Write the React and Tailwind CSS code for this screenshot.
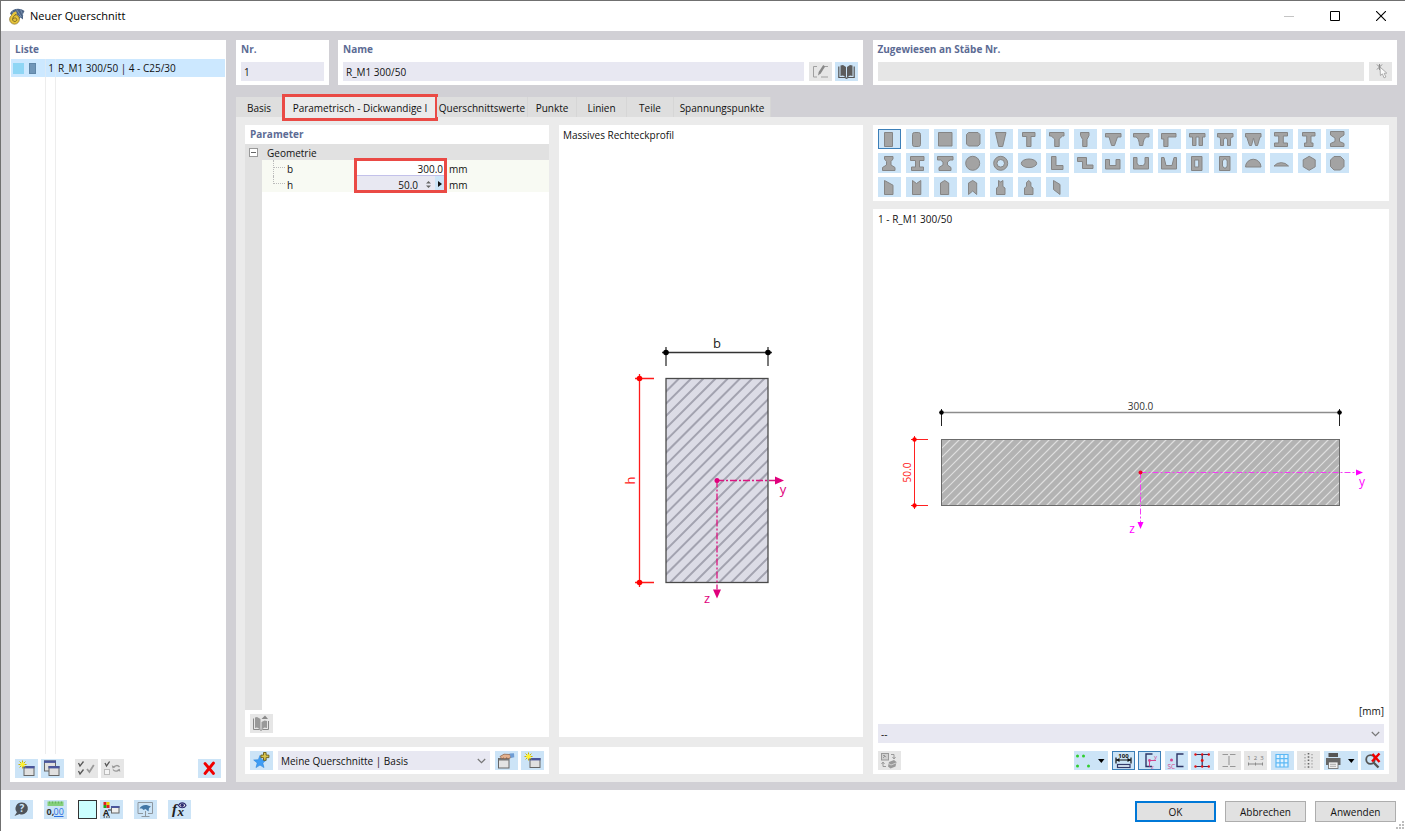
import React from "react";

const BLUE = "bg-[#cce4f7]";
const GREY = "bg-[#e6e6e6]";

function IconButton({ label, disabled, active, wide, children }) {
  const bg = disabled ? GREY : BLUE;
  const ring = active ? "border border-[#3c7fb8]" : "border border-transparent";
  return (
    <button
      type="button"
      aria-label={label}
      title={label}
      disabled={disabled}
      className={`${bg} ${ring} ${wide ? "w-[34px]" : "w-[23px]"} flex h-[19px] shrink-0 items-center justify-center`}
    >
      <svg
        viewBox={wide ? "0 0 34 19" : "0 0 23 19"}
        className={wide ? "h-[19px] w-[34px] shrink-0" : "h-[19px] w-[23px] shrink-0"}
        fill="none"
        aria-hidden="true"
      >
        {children}
      </svg>
    </button>
  );
}

function Panel({ className = "", children }) {
  return <section className={`bg-white ${className}`}>{children}</section>;
}

const TITLE = "text-[10px] leading-[18px] font-bold text-[#5c6b94]";
const FIELD = "h-[19px] min-w-0 px-[3px] text-[10px] text-[#111] outline-none";

/* ---------- toolbar glyphs ---------- */

const WindowGlyph = ({ x = 8, y = 7 }) => (
  <g>
    <rect x={x + 0.5} y={y + 0.5} width="10" height="9" fill="#e0e0e0" stroke="#666" />
    <rect x={x} y={y} width="11" height="2.4" fill="#4a569c" />
  </g>
);

const NewGlyph = () => (
  <>
    <WindowGlyph x={8.5} y={7} />
    <path d="M7.5 1.5v8M3.5 5.5h8M4.6 2.6l5.8 5.8M10.4 2.6L4.6 8.4" stroke="#c9b400" strokeWidth="1" />
    <circle cx="7.5" cy="5.5" r="2.2" fill="#fff22e" />
  </>
);

const CopyGlyph = () => (
  <>
    <rect x="3.5" y="2" width="11" height="10" fill="#e0e0e0" stroke="#666" />
    <rect x="3" y="1.5" width="12" height="2.4" fill="#4a569c" />
    <WindowGlyph x={7.5} y={7} />
  </>
);

const ChecksGlyph = () => (
  <>
    <path d="M3.5 4l1.5 3L8.5 2.5M3.5 12l1.5 3 3.5-4.5" stroke="#555" strokeWidth="1.3" />
    <path d="M12 10l2.4 3 4.4-7" stroke="#999" strokeWidth="1.8" />
  </>
);

const CheckSwapGlyph = () => (
  <>
    <path d="M4 4l1.5 3L8.6 2.5" stroke="#555" strokeWidth="1.3" />
    <rect x="3.5" y="10.5" width="5" height="5" fill="#f4f4f4" stroke="#bbb" />
    <path d="M18.5 8c-1.5-2-4-2-6 .2M12 10.5c1.5 2.2 4.4 2.2 6 .4" stroke="#999" strokeWidth="1.3" />
    <path d="M10.8 6.2l.8 3.3 2.8-1.5zM19.3 12.8l-.5-3-2.8 1.2z" fill="#999" />
  </>
);

const DeleteGlyph = () => (
  <path d="M7 4.5l8.500 10M15.500 4l-8.500 10.500" stroke="#f00000" strokeWidth="2.800" strokeLinecap="round" />
);

const StarPlusGlyph = () => (
  <>
    <path d="M10 4.5l1.7 4.2 4.6.3-3.5 3 1.2 4.6-4-2.5-4 2.5 1.2-4.6-3.5-3 4.6-.3z" fill="#3d9df5" stroke="#2d86dc" strokeWidth=".6" />
    <path d="M13.5 1.5h2.6v2.6h2.8v2.5h-2.8v2.7h-2.6V6.6h-2.6V4.1h2.6z" fill="#d7c34c" stroke="#665a16" strokeWidth=".9" />
  </>
);

const HandGlyph = () => (
  <>
    <rect x="3.5" y="7.5" width="10.5" height="9.5" fill="#e4e4e4" stroke="#666" />
    <path d="M4 8.5h10" stroke="#777" strokeWidth="2" />
    <path d="M5 5.5l4-2.3 6 .3 1 3-3 1.2-1.5-1-1.5 1.400-1.5-1.200-1.5.9z" fill="#e3b18e" stroke="#8a5a3c" strokeWidth=".7" />
    <path d="M14.5 2.5l4.5-.3.3 4-3.5.8z" fill="#6f9dd4" />
  </>
);

const BookGlyph = () => (
  <>
    <path d="M5.5 3.5L8 3l3 2v10.500L8 13.5l-2.500.5zM17.500 3.5L15 3l-3 2v10.500l3-2 2.500.5z" fill="#5c5c5c" />
    <path d="M3.8 4.500v11h6.200l1.500.8 1.500-.8h6.200v-11" stroke="#555" strokeWidth="1.200" />
  </>
);

const BookImportGlyph = () => (
  <>
    <path d="M5 3.500L7 3l3.500 2v10.500L7 13.500l-2 .5z" fill="#999" />
    <path d="M11.500 8l3-1.500L17 7v7l-2.500-.5-3 2z" fill="#999" />
    <path d="M3.500 4.500v11h6l1.500.8 1.500-.8h6V7" stroke="#888" strokeWidth="1" />
    <path d="M11.500 5L15 1.500 18 5z" fill="#8a8a8a" />
  </>
);

const EditGlyph = () => (
  <>
    <path d="M8 4.500H4.500v10.500H8M12 15h7M16 4.500h3" stroke="#a0a0a0" strokeWidth="1" />
    <path d="M9 13.500l.7-3.500 4.500-7 2 1.500-4.500 7z" fill="#888" />
  </>
);

const PickGlyph = () => (
  <>
    <path d="M8 2.500l5 5M13 2.500l-5 5M10.500 2v6" stroke="#8a8a8a" strokeWidth="1" />
    <path d="M11 5l.4 8.500 2-1.600 1.700 4 1.800-.9-1.700-3.700 2.600-.2z" fill="#fafafa" stroke="#9a9a9a" strokeWidth=".8" />
  </>
);

const HelpGlyph = () => (
  <>
    <path d="M12 2.500a6 6 0 1 1-2.500 11.500L4.500 16l2.400-3.700A6 6 0 0 1 12 2.500z" fill="#4e545b" />
    <text x="12" y="12" fontSize="10" fontWeight="700" textAnchor="middle" fill="#cce4f7">?</text>
  </>
);

const DecimalsGlyph = () => (
  <>
    <rect x="3.500" y="1.500" width="16" height="4.500" fill="#85cf7c" />
    <path d="M5.500 1.500v2M8.500 1.500v2M11.500 1.500v2M14.500 1.500v2M17.500 1.500v2" stroke="#5fae57" strokeWidth=".8" />
    <text x="2.500" y="14.500" fontSize="9" fontWeight="700" fill="#333">0,</text>
    <text x="9.500" y="14.500" fontSize="9" fill="#2a6fe0">00</text>
    <path d="M10 16.500h9.500" stroke="#2a6fe0" />
  </>
);

const DisplayGlyph = () => (
  <>
    <path d="M3.500 2h3v3h-3z" fill="#e02020" />
    <path d="M6.500 2h3v3h-3z" fill="#ead000" />
    <path d="M3.500 5h3v3h-3z" fill="#1ba81b" />
    <path d="M6.500 5h3v3h-3z" fill="#e02020" />
    <text x="3" y="15.500" fontSize="9" fontWeight="700" fill="#222">A</text>
    <path d="M3.500 17h7" stroke="#222" strokeDasharray="1.500 1" />
    <path d="M8 10h3" stroke="#222" />
    <rect x="11.500" y="6.500" width="7.500" height="6.500" fill="#eee" stroke="#666" />
    <path d="M11 7h8.500" stroke="#4a569c" strokeWidth="2" />
  </>
);

const MonitorGlyph = () => (
  <>
    <path d="M9 13.500H4v-11h14.500v11H14M7.500 16.500h8" stroke="#8e979f" strokeWidth="1" />
    <path d="M5.500 8.500c2-3.500 6-5 11.500-2l-2 1.500-.5 3.500-3-2.500-2 1-1.500-1.500z" fill="#4377a6" />
    <path d="M11.500 11v5" stroke="#8e979f" />
  </>
);

const FormulaGlyph = () => (
  <>
    <text x="4" y="14" fontSize="15" fontStyle="italic" fontWeight="700" fontFamily="Liberation Serif, serif" fill="#222">f</text>
    <text x="9.500" y="15.500" fontSize="13" fontStyle="italic" fontWeight="700" fontFamily="Liberation Serif, serif" fill="#222">x</text>
    <path d="M10.500 5.500c1.500-3.500 6-3.500 7.500 0-1.500 3-6 3-7.500 0z" fill="#eee" stroke="#2b2b70" strokeWidth="1.100" />
    <circle cx="14.200" cy="5.200" r="1.700" fill="#2b2b70" />
  </>
);

const DotsGlyph = () => (
  <>
    <g fill="#2fce2f">
      <circle cx="3.500" cy="5" r="1.500" />
      <circle cx="9.500" cy="5" r="1.500" />
      <circle cx="3.500" cy="15" r="1.500" />
      <circle cx="14.500" cy="15" r="1.500" />
    </g>
    <path d="M24 8h6.500l-3.200 4z" fill="#000" />
  </>
);

const DimGlyph = () => (
  <>
    <text x="11.500" y="6.500" fontSize="6" fontWeight="700" textAnchor="middle" fill="#111">100</text>
    <path d="M4 9h15M4 6.500v6M19 6.500v6" stroke="#111" strokeWidth="1.200" />
    <path d="M4 9l3.500-2v4zM19 9l-3.500-2v4z" fill="#111" />
    <rect x="5.500" y="13.500" width="12.500" height="3" fill="#dbe9f5" stroke="#333a6a" strokeWidth="1.200" />
  </>
);

const AxesGlyph = () => (
  <>
    <path d="M14.500 3H8v12.500h6" stroke="#2d3566" strokeWidth="1.400" />
    <path d="M11.500 9.500h6.500M11.500 9.500v6" stroke="#d2468f" strokeWidth="1" />
    <circle cx="11.500" cy="9.500" r="1.400" fill="#d2468f" />
    <text x="16" y="7.500" fontSize="6" fill="#d2468f">y</text>
    <text x="13" y="17.500" fontSize="6" fill="#d2468f">z</text>
  </>
);

const ShearGlyph = () => (
  <>
    <path d="M18.500 3h-6.500v12.500h6.500" stroke="#2d3566" strokeWidth="1.400" />
    <circle cx="6.500" cy="9" r="1.500" fill="#d2468f" />
    <text x="2.500" y="17.500" fontSize="6.500" fill="#d2468f">SC</text>
  </>
);

const BeamGlyph = () => (
  <>
    <path d="M5 3.500h12.500M5 15.500h12.500M11.200 3.500v12" stroke="#2d3566" strokeWidth="1.200" />
    <g fill="#e81010">
      <circle cx="4.500" cy="3.500" r="1.200" />
      <circle cx="11.200" cy="3.500" r="1.200" />
      <circle cx="17.800" cy="3.500" r="1.200" />
      <circle cx="11.200" cy="9.500" r="1.400" />
      <circle cx="4.500" cy="15.500" r="1.200" />
      <circle cx="11.200" cy="15.500" r="1.200" />
      <circle cx="17.800" cy="15.500" r="1.200" />
    </g>
  </>
);

const BeamOffGlyph = () => (
  <path d="M4.500 3.500h5.500M12 3.500h5.500M4.500 15.500h5.500M12 15.500h5.500M11 5v9" stroke="#979797" strokeWidth="1.100" />
);

const NumbersGlyph = () => (
  <>
    <text x="11.500" y="8.500" fontSize="6" textAnchor="middle" fill="#777">1&#160; 2&#160; 3</text>
    <path d="M4 13h15M4.500 11.500v3M11.500 11.500v3M18.500 11.500v3" stroke="#8a8a8a" />
  </>
);

const GridGlyph = () => (
  <>
    <rect x="5" y="3.500" width="12" height="12.500" fill="#e2f3ff" />
    <path d="M5 3.500h12M5 7.700h12M5 11.800h12M5 16h12M5 3v13.500M9 3v13.500M13 3v13.500M17 3v13.500" stroke="#5bb8f5" strokeWidth="1.200" />
  </>
);

const DottedGlyph = () => (
  <>
    <path d="M11.500 2v16" stroke="#666" strokeWidth="1.600" strokeDasharray="1.500 1.800" />
    <path d="M8 3v14M15 3v14" stroke="#a0a0a0" strokeWidth="1.300" strokeDasharray="1.300 1.800" />
  </>
);

const PrintGlyph = () => (
  <>
    <rect x="4.500" y="2" width="9.500" height="4" fill="#555" />
    <path d="M2 7h14.500v7H2z" fill="#666" />
    <rect x="4.500" y="11" width="9.500" height="6.500" fill="#f0f0f0" stroke="#666" strokeWidth=".8" />
    <path d="M6 13.300h6M6 15.300h6" stroke="#999" strokeWidth=".8" />
    <path d="M24 8h6.500l-3.200 4z" fill="#000" />
  </>
);

const ZoomOffGlyph = () => (
  <>
    <circle cx="9.500" cy="8.500" r="4.300" stroke="#555" strokeWidth="1.800" />
    <path d="M12.500 11.500l5 5" stroke="#555" strokeWidth="2.400" />
    <path d="M11.500 3l7 8M18.500 2.500l-7.500 8" stroke="#f00000" strokeWidth="2.400" />
  </>
);

const SwapGlyph = () => (
  <>
    <rect x="3.500" y="2.500" width="7" height="6.500" fill="#d0d0d0" stroke="#999" />
    <path d="M5 7l2-2 1 1.200M5 4.500h2M13 3.500h3v4M14.500 6l1.500 2 1.500-2M8 15.500H5v-4M3.500 13L5 11l1.500 2" stroke="#999" />
    <path d="M11 11l5-2 2.500 2-1 4.500-5 2-2.500-2z" fill="#999" />
    <path d="M10.500 12.500l2.500 1.500 5-2" stroke="#ddd" strokeWidth=".8" />
  </>
);

/* ---------- section shape palette ---------- */

const SHAPES = [
  ["Rechteck", "M6.500 3.500h8v14h-8z"],
  ["Rechteck abgerundet", "M9 3.500h3.500q2 0 2 2v10q0 2-2 2H8.500q-2 0-2-2v-10q0-2 2-2z"],
  ["Quadrat", "M4.500 3.500h13.500v13.500H4.500z"],
  ["Quadrat abgerundet", "M6.500 3.500h9.500l2 2v9.500l-2 2H6.500l-2-2V5.500z"],
  ["Trapez", "M5.500 3.500h10.500l-3.300 14H8.700z"],
  ["T-Profil", "M4.500 3.500H17V7.500h-4v10H8.700v-10H4.500z"],
  ["T-Profil mit Voute", "M3.500 3.500H18V7h-1.500l-3.300 3v7.500H8.700V10L5.200 7H3.500z"],
  ["T-Profil schmal", "M6.500 3.500H15V6.500l-2 4v7H8.700v-7l-2.200-4z"],
  ["T-Profil konisch", "M3.500 4.500H19V8h-3.500l-3 8.500H9.600L7 8H3.500z"],
  ["T-Profil rund", "M3.500 4.500H19V8h-2.500q-3 1-3.700 8.500H9.500Q9 9 6 8H3.500z"],
  ["L-Flansch", "M3.500 4.500H18V8h-8v9.500H5.800V10H3.500z"],
  ["TT-Profil", "M3.500 4.500H19V8h-2.500v8.500h-3.500V8h-3v8.500H6.500V8h-3z"],
  ["TT-Profil rund", "M3.500 4.500H19V8h-1.500q-1 1-1 3v5.500h-3V11q0-2-2-2t-2 2v5.500h-3V11q0-2-1-3h-2z"],
  ["TT-Profil konisch", "M3.500 4.500H19V8h-1l-2.500 8.500h-2L11.500 9l-2 7.500h-2L4.700 8H3.500z"],
  ["I-Profil", "M4.500 3.500H17.500V7H13.300v7h4.200v3.500H4.500V14h4.200V7H4.500z"],
  ["I-Profil unsymmetrisch", "M4.500 3.500H17V7H13v7h2v3.500H6.500V14h2.200V7H4.500z"],
  ["I-Profil mit Vouten", "M4.500 2.500H18V6l-4.500 3v3.500L18 14.500v3H4.500v-3L9 12.500V9L4.500 6z"],
  ["I-Profil Vouten unten", "M6.500 3.500h8.500V6l-2 2.500V12l4 2.500v3H4.500v-3l4-2.500V8.500l-2-2.500z"],
  ["I-Profil versetzt", "M4.500 3.500H18V7.500h-4.500V14H17.500v3.500H5.500V14H9.500V7.500h-5z"],
  ["I-Profil breit", "M3.500 3.500H19V7h-3l-2.500 2v3l3.500 2.500v3H5v-3L9 12V9L6.500 7h-3z"],
  ["Kreis", "M17.700 10.300a7 7 0 1 1-14 0a7 7 0 1 1 14 0z"],
  ["Rohr", "M17.700 10.300a7 7 0 1 1-14 0a7 7 0 1 1 14 0zM14.500 10.300a3.800 3.800 0 1 0-7.600 0a3.800 3.800 0 1 0 7.600 0z"],
  ["Ellipse", "M18.700 10.300a7.700 4.300 0 1 1-15.400 0a7.700 4.300 0 1 1 15.400 0z"],
  ["L-Profil", "M5.500 3.500h4.500v9h7v4H5.500z"],
  ["Z-Profil", "M3.500 4.500H12.500v7.500H19v3.500H8.500V8.500h-5z"],
  ["U-Profil", "M3.500 6.500h4v6h6.500v-6H18v9.500H3.500z"],
  ["U-Profil rund", "M3.500 4.500h3.500v5.500q.5 2.500 2.500 2.500h3q2 0 2.500-2.500V4.500h3.500V16H3.500z"],
  ["U-Profil konisch", "M3.500 4.500H6l2 8h6l2-8h2.500V16H3.500z"],
  ["Hohlkasten", "M5.500 3.500h10.500v14H5.500zM8.700 7v7h4V7z"],
  ["Hohlkasten rund", "M5.500 3.500h10.500v14H5.500zM10 6L8.500 8v5l1.500 2h2l1.200-2V8L12 6z"],
  ["Halbkreis", "M3.500 14a7.700 7.700 0 0 1 15.500 0z"],
  ["Kreissegment", "M4 13a9.500 9.500 0 0 1 14.500 0z"],
  ["Sechseck", "M11.200 3.300l6 3.500v7l-6 3.500-6-3.500v-7z"],
  ["Achteck", "M8 3.500h6.500l3.500 3.500v6.500L14.500 17H8l-3.500-3.500V7z"],
  ["Schräge Oberseite", "M6.500 3.500l8.500 4.700v9.300H6.500z"],
  ["Kerbe oben", "M6.500 3.500l4 3 4.300-3v14H6.500z"],
  ["Satteldach", "M6.500 6l4.200-2.500L14.700 6v11.500H6.500z"],
  ["Satteldach mit Kerbe", "M6.500 6l4.200-2.500L14.700 6v11.500l-4-3.500-4.200 3.500z"],
  ["Flasche mit Kerbe", "M8.500 3.500l2.200 1.500 2.200-1.500v6l2.100 1.500v6.500H6.500v-6.500L8.500 9.500z"],
  ["Flasche spitz", "M8.500 5.500l2.200-2 2.200 2v4l2.100 1.500v6.500H6.500v-6.500L8.500 9.500z"],
  ["Parallelogramm", "M7.500 3.500l6.500 4v10l-6.500-5z"],
];

function ShapePalette() {
  return (
    <div className="grid w-max grid-cols-[repeat(17,23px)] gap-x-[5px] gap-y-1">
      {SHAPES.map(([name, d], i) => (
        <button
          key={name}
          type="button"
          aria-label={name}
          title={name}
          aria-pressed={i === 0}
          className={
            i === 0
              ? "flex h-5 w-[23px] items-center justify-center border border-[#3c7fb8] bg-[#cce4f7]"
              : "flex h-5 w-[23px] items-center justify-center bg-[#cce4f7]"
          }
        >
          <svg viewBox="0 0 23 20" className="h-5 w-[23px] shrink-0" aria-hidden="true">
            <path d={d} fill="#a3a3a3" stroke="#858585" strokeWidth="1" fillRule="evenodd" />
          </svg>
        </button>
      ))}
    </div>
  );
}

/* ---------- drawings ---------- */

/* Diagonal strokes running up to the right, clipped to a rectangle. */
function Hatch({ id, x, y, width, height, step, offset, stroke, strokeWidth }) {
  const lines = [];
  for (let s = offset; s < width + height; s += step) {
    lines.push(`M${x + s - height} ${y + height}L${x + s} ${y}`);
  }
  return (
    <>
      <clipPath id={id}>
        <rect x={x} y={y} width={width} height={height} />
      </clipPath>
      <path d={lines.join("")} clipPath={`url(#${id})`} stroke={stroke} strokeWidth={strokeWidth} fill="none" />
    </>
  );
}

function ProfileSketch() {
  return (
    <svg viewBox="0 0 180 290" className="h-[290px] w-[180px]" role="img" aria-label="Massives Rechteckprofil">
      <rect x="46" y="53.500" width="102" height="204" fill="#dcdce6" />
      <Hatch id="hatch-profile" x={46} y={53.5} width={102} height={204} step={12.2} offset={13} stroke="#a3a3b0" strokeWidth="2" />
      <rect x="46" y="53.500" width="102" height="204" fill="none" stroke="#4a4a4a" strokeWidth="1.300" />
      <path d="M42 27.500h110M46 22v19M148 22v19" stroke="#333" strokeWidth="1.300" />
      <circle cx="46" cy="27.500" r="2.800" />
      <circle cx="148" cy="27.500" r="2.800" />
      <text x="97" y="23" fontSize="13" textAnchor="middle" fill="#222">b</text>
      <path d="M19.500 49v213M15 53.500h19M15 257.500h19" stroke="#ff1a1a" strokeWidth="1.300" />
      <circle cx="19.500" cy="53.500" r="2.800" fill="#f00" />
      <circle cx="19.500" cy="257.500" r="2.800" fill="#f00" />
      <text x="15" y="155.500" fontSize="13" textAnchor="middle" fill="#ff1a1a" transform="rotate(-90 15 155.500)">h</text>
      <path d="M97 155.500h58M97 155.500v109" stroke="#dc1480" strokeWidth="1.300" strokeDasharray="7 2 2 2" />
      <circle cx="97" cy="155.500" r="2.500" fill="#e0007c" />
      <path d="M155 151.500v8l9-4zM93 264.500h8l-4 9z" fill="#e0007c" />
      <text x="163" y="169" fontSize="13" textAnchor="middle" fill="#e0007c">y</text>
      <text x="87" y="278" fontSize="13" textAnchor="middle" fill="#e0007c">z</text>
    </svg>
  );
}

function SectionSketch() {
  return (
    <svg viewBox="0 0 500 150" className="h-[150px] w-[500px] max-w-full" role="img" aria-label="R_M1 300/50">
      <rect x="60.500" y="47.500" width="398" height="66" fill="#b3b3b3" />
      <Hatch id="hatch-section" x={60.5} y={47.5} width={398} height={66} step={9} offset={9} stroke="#dedede" strokeWidth="1.200" />
      <rect x="60.500" y="47.500" width="398" height="66" fill="none" stroke="#6b6b6b" />
      <path d="M58 20.500h403" stroke="#8c8c8c" strokeWidth="1.500" />
      <path d="M60.500 17v17M458.500 17v17" stroke="#222" />
      <circle cx="60.500" cy="20.500" r="2.200" />
      <circle cx="458.500" cy="20.500" r="2.200" />
      <text x="259.500" y="17.500" fontSize="10" textAnchor="middle" fill="#333">300.0</text>
      <path d="M33.500 44v73M30 47.500h17M30 113.500h17" stroke="#ff2020" />
      <circle cx="33.500" cy="47.500" r="2.200" fill="#f00" />
      <circle cx="33.500" cy="113.500" r="2.200" fill="#f00" />
      <text x="30" y="80.500" fontSize="10" textAnchor="middle" fill="#ff2020" transform="rotate(-90 30 80.500)">50.0</text>
      <path d="M259.500 80.500h216" stroke="#f43cf4" strokeDasharray="6 2 2 2" />
      <path d="M259.500 80.500v50" stroke="#f43cf4" strokeDasharray="6 2 2 2" />
      <path d="M475 77.500v6l7-3zM256.500 130h6l-3 7z" fill="#f0f" />
      <circle cx="259.500" cy="80.500" r="2" fill="#f00020" />
      <text x="481" y="94" fontSize="12" textAnchor="middle" fill="#f0f">y</text>
      <text x="251" y="141" fontSize="12" textAnchor="middle" fill="#f0f">z</text>
    </svg>
  );
}

/* ---------- page parts ---------- */

function Combo({ id, label, value }) {
  return (
    <div className="relative min-w-0 flex-1">
      <label htmlFor={id} className="sr-only">{label}</label>
      <select id={id} className={`${FIELD} block w-full appearance-none bg-[#e8e8f2] leading-[18px]`}>
        <option>{value}</option>
      </select>
      <svg viewBox="0 0 9 6" className="pointer-events-none absolute top-[7px] right-1 h-[6px] w-[9px]" fill="none" aria-hidden="true">
        <path d="M.8 1l3.700 3.700L8.200 1" stroke="#777" strokeWidth="1.200" />
      </svg>
    </div>
  );
}

function TitleBar() {
  return (
    <header className="flex h-[30px] shrink-0 items-center bg-white pr-px pl-2">
      <svg viewBox="0 0 16 17" className="h-[17px] w-4" aria-hidden="true">
        <path d="M1 5.500C3 1 10-1 15.500 3l-1.500 3v5.500l-2.500-2-2 2.500L3 8z" fill="#4d6485" />
        <path d="M3 3.500l9 6M7.500 1.500l5 7.500M11.500 1.500l2.500 6" stroke="#8aa3c2" strokeWidth=".7" />
        <circle cx="5.500" cy="11.300" r="4.900" fill="#e0bd35" stroke="#8a7430" strokeWidth=".7" />
        <path d="M7.500 4.500C4.500 5.500 3 8.500 3.300 11.500c.5 3 4.700 2.600 4.700 0 0-2.400-3.400-2.700-4.400-.4" fill="none" stroke="#e6c53c" strokeWidth="2.600" />
        <path d="M7 6.500C4.800 7.500 3.600 9.500 3.600 11.700c.5 2.600 4.200 2.200 4.200 0 0-2.200-3.200-2.400-4-.3" fill="none" stroke="#6d5d22" strokeWidth=".9" />
      </svg>
      <h1 className="ml-[5px] flex-1 text-[11px] leading-4 text-black">Neuer Querschnitt</h1>
      <button type="button" aria-label="Minimieren" disabled className="flex h-full w-[46px] items-center justify-center">
        <svg viewBox="0 0 10 10" className="size-[10px]" aria-hidden="true"><path d="M0 5.500h10" stroke="#c4c4c4" /></svg>
      </button>
      <button type="button" aria-label="Maximieren" className="flex h-full w-[46px] items-center justify-center">
        <svg viewBox="0 0 10 10" className="size-[10px]" fill="none" aria-hidden="true"><path d="M.5.500h9v9h-9z" stroke="#000" /></svg>
      </button>
      <button type="button" aria-label="Schließen" className="flex h-full w-[46px] items-center justify-center">
        <svg viewBox="0 0 10 10" className="size-[10px]" aria-hidden="true"><path d="M0 0l10 10M10 0L0 10" stroke="#000" strokeWidth="1.100" /></svg>
      </button>
    </header>
  );
}

function ListPanel() {
  return (
    <Panel className="flex w-[216px] shrink-0 flex-col">
      <h2 className={`${TITLE} px-[5px] pb-px`}>Liste</h2>
      <ul className="flex flex-1 flex-col px-px">
        <li className="flex h-[18px] items-center bg-[#cce8ff] text-[10px] leading-[18px] text-[#111]">
          <span className="flex h-full w-[35px] items-center gap-[5px] border-r border-[#dbeaf7] pl-[2px]">
            <span className="h-[11px] w-[11px] bg-[#8fd6f5]" />
            <span className="h-[11px] w-[7px] border border-[#5f86a8] bg-[#7096b8]" />
          </span>
          <span className="flex h-full w-[10px] items-center justify-end border-r border-[#dbeaf7] pr-px">1</span>
          <span className="pl-[2px]">R_M1 300/50 | 4 - C25/30</span>
        </li>
        <li aria-hidden="true" className="flex flex-1">
          <span className="w-[35px] border-r border-[#ededed]" />
          <span className="w-[10px] border-r border-[#ededed]" />
        </li>
      </ul>
      <div className="flex gap-[3px] px-[5px] pt-[5px] pb-1">
        <IconButton label="Neu"><NewGlyph /></IconButton>
        <IconButton label="Kopieren"><CopyGlyph /></IconButton>
        <span className="w-[5px]" />
        <IconButton label="Alle auswählen" disabled><ChecksGlyph /></IconButton>
        <IconButton label="Auswahl umkehren" disabled><CheckSwapGlyph /></IconButton>
        <span className="flex-1" />
        <IconButton label="Löschen"><DeleteGlyph /></IconButton>
      </div>
    </Panel>
  );
}

function HeaderFields() {
  return (
    <div className="flex h-[45px] shrink-0">
      <Panel className="mr-[9px] w-[93px] px-[5px]">
        <label htmlFor="nr" className={`${TITLE} mb-1 block`}>Nr.</label>
        <input id="nr" defaultValue="1" className={`${FIELD} block w-full bg-[#e8e8f2] pt-px`} />
      </Panel>
      <Panel className="mr-[10px] min-w-0 flex-1 px-[5px]">
        <label htmlFor="name" className={`${TITLE} mb-1 block`}>Name</label>
        <div className="flex">
          <input id="name" defaultValue="R_M1 300/50" className={`${FIELD} flex-1 bg-[#e8e8f2] pt-px`} />
          <div className="ml-[5px] flex gap-[3px]">
            <IconButton label="Name bearbeiten" disabled><EditGlyph /></IconButton>
            <IconButton label="Bibliothek"><BookGlyph /></IconButton>
          </div>
        </div>
      </Panel>
      <Panel className="min-w-0 flex-1 px-[5px]">
        <label htmlFor="members" className={`${TITLE} mb-1 block`}>Zugewiesen an Stäbe Nr.</label>
        <div className="flex gap-[5px]">
          <input id="members" disabled className={`${FIELD} flex-1 bg-[#e6e6e6]`} />
          <IconButton label="Stäbe wählen" disabled><PickGlyph /></IconButton>
        </div>
      </Panel>
    </div>
  );
}

const TABS = [
  ["Basis", "w-[47px]"],
  ["Parametrisch - Dickwandige I", "w-[154px]"],
  ["Querschnittswerte", "w-[91px]"],
  ["Punkte", "w-[49px]"],
  ["Linien", "w-[50px]"],
  ["Teile", "w-[47px]"],
  ["Spannungspunkte", "w-[97px]"],
];

function Tabs() {
  return (
    <div role="tablist" className="mt-3 flex h-5 shrink-0 text-[10px] leading-4 text-[#111]">
      {TABS.map(([name, width], i) => (
        <button
          key={name}
          type="button"
          role="tab"
          aria-selected={i === 1}
          className={`${width} ${i === 1 ? "bg-[#ebebeb]" : "border-r border-[#d6d6d6] bg-[#dedede]"} relative flex shrink-0 items-center justify-center pt-[2px] whitespace-nowrap`}
        >
          {name}
          {i === 1 && <span className="absolute -inset-x-px -top-[3px] -bottom-1 border-3 border-[#ea4a45]" />}
        </button>
      ))}
    </div>
  );
}

function ParameterPanel() {
  return (
    <Panel className="flex min-h-0 flex-1 flex-col">
      <h2 className={`${TITLE} px-[5px] pb-px`}>Parameter</h2>
      <div className="flex flex-1">
        <div className="w-[17px] shrink-0 bg-[#e1e1e1]">
          <button type="button" aria-label="Geometrie einklappen" className="mx-1 mt-1 flex size-[9px] items-center justify-center border border-[#999] bg-white">
            <span className="h-px w-[5px] bg-[#666]" />
          </button>
        </div>
        <div className="relative min-w-0 flex-1 text-[10px] leading-[18px] text-[#111]">
          <h3 className="h-4 bg-[#e1e1e1] pl-[5px]">Geometrie</h3>
          <div className="flex h-4 items-center bg-[#f8faf3]">
            <span className="ml-[11px] h-4 w-3 border-l border-dotted border-[#bbb]">
              <span className="block h-2 border-b border-dotted border-[#bbb]" />
            </span>
            <label htmlFor="b" className="w-[72px] pt-px pl-[2px]">b</label>
            <input id="b" defaultValue="300.0" className="h-4 w-[87px] border-b border-[#c3c1ea] bg-white pt-[2px] pr-px text-right outline-none" />
            <span className="pt-px pl-[5px]">mm</span>
          </div>
          <div className="flex h-4 items-center bg-[#f8faf3]">
            <span className="ml-[11px] h-4 w-3">
              <span className="block h-2 border-b border-l border-dotted border-[#bbb]" />
            </span>
            <label htmlFor="h" className="w-[72px] pt-px pl-[2px]">h</label>
            <input id="h" defaultValue="50.0" className="h-4 w-[61px] bg-[#e8e8f2] pt-px text-right outline-none" />
            <button type="button" aria-label="Wert ändern" className="flex h-4 w-[17px] items-center justify-center bg-[#e8e8f2] pl-1">
              <svg viewBox="0 0 5 7" className="h-[7px] w-[5px]" aria-hidden="true"><path d="M0 2.500L2.500 0 5 2.500zM0 4.500L2.500 7 5 4.500z" fill="#666" /></svg>
            </button>
            <button type="button" aria-label="Weitere Werte" className="flex h-4 w-[9px] items-center justify-center bg-[#cce4f7]">
              <svg viewBox="0 0 4 6" className="h-[6px] w-1" aria-hidden="true"><path d="M0 0l4 3-4 3z" fill="#111" /></svg>
            </button>
            <span className="pt-px pl-[5px]">mm</span>
          </div>
          <span className="pointer-events-none absolute top-[14px] left-[92px] h-[35px] w-[93px] border-3 border-[#ea4a45]" />
        </div>
      </div>
      <div className="px-[5px] py-1">
        <IconButton label="Aus Bibliothek" disabled><BookImportGlyph /></IconButton>
      </div>
    </Panel>
  );
}

function ResultPanel() {
  return (
    <Panel className="flex min-h-0 flex-1 flex-col px-[5px] pb-1">
      <p className="pt-px text-[10px] leading-[18px] text-[#111]">1 - R_M1 300/50</p>
      <div className="flex flex-1 items-center justify-center pt-[5px]">
        <SectionSketch />
      </div>
      <p className="mb-1 pt-px text-right text-[10px] leading-[18px] text-[#111]">[mm]</p>
      <div className="flex"><Combo id="stress" label="Anzeige" value="--" /></div>
      <div className="mt-2 flex justify-between">
        <IconButton label="Tauschen" disabled><SwapGlyph /></IconButton>
        <div className="flex w-[310px] justify-between">
          <IconButton label="Punkte" wide><DotsGlyph /></IconButton>
          <IconButton label="Bemaßung" active><DimGlyph /></IconButton>
          <IconButton label="Achsen" active><AxesGlyph /></IconButton>
          <IconButton label="Schubmittelpunkt"><ShearGlyph /></IconButton>
          <IconButton label="Spannungspunkte anzeigen"><BeamGlyph /></IconButton>
          <IconButton label="Teile anzeigen" disabled><BeamOffGlyph /></IconButton>
          <IconButton label="Nummerierung" disabled><NumbersGlyph /></IconButton>
          <IconButton label="Raster"><GridGlyph /></IconButton>
          <IconButton label="Bewehrung" disabled><DottedGlyph /></IconButton>
          <IconButton label="Drucken" wide><PrintGlyph /></IconButton>
          <IconButton label="Ansicht zurücksetzen"><ZoomOffGlyph /></IconButton>
        </div>
      </div>
    </Panel>
  );
}

function Footer() {
  const btn = "h-[21px] w-[81px] bg-[#e1e1e1] text-[10px] leading-4 text-[#111]";
  return (
    <footer className="relative flex h-[41px] shrink-0 items-start justify-between bg-white pt-[10px] pr-[9px] pl-[9px]">
      <div className="flex gap-[11px]">
        <IconButton label="Hilfe"><HelpGlyph /></IconButton>
        <IconButton label="Einheiten und Dezimalstellen"><DecimalsGlyph /></IconButton>
        <div className="flex gap-[3px]">
          <button type="button" aria-label="Farbe" className="size-[19px] border border-[#333] bg-[#ccffff]" />
          <IconButton label="Anzeigeeigenschaften"><DisplayGlyph /></IconButton>
        </div>
        <IconButton label="Ansicht"><MonitorGlyph /></IconButton>
        <IconButton label="Formeln"><FormulaGlyph /></IconButton>
      </div>
      <div className="flex gap-[9px] pt-px">
        <button type="button" className={`${btn} border-2 border-[#0078d7]`}>OK</button>
        <button type="button" className={`${btn} border border-[#adadad]`}>Abbrechen</button>
        <button type="button" className={`${btn} border border-[#adadad]`}>Anwenden</button>
      </div>
      <svg viewBox="0 0 9 9" className="absolute right-0 bottom-px size-[9px]" fill="#bdbdbd" aria-hidden="true">
        <path d="M6 0h2v2H6zM3 3h2v2H3zM6 3h2v2H6zM0 6h2v2H0zM3 6h2v2H3zM6 6h2v2H6z" />
      </svg>
    </footer>
  );
}

export default function App() {
  return (
    <div className="flex min-h-screen flex-col border-t border-l border-[#707070] bg-white font-['Open_Sans','Noto_Sans',sans-serif]">
      <TitleBar />
      <main className="flex flex-1 gap-[10px] bg-[#d1d0d5] pt-[9px] pr-2 pb-2 pl-[9px]">
        <ListPanel />
        <div className="flex min-w-0 flex-1 flex-col">
          <HeaderFields />
          <Tabs />
          <div className="grid flex-1 grid-cols-[304fr_304fr_516fr] gap-[10px] bg-[#ebebeb] py-2 pr-2 pl-[9px]">
            <div className="flex min-w-0 flex-col gap-[10px]">
              <ParameterPanel />
              <Panel className="flex h-[27px] shrink-0 items-center px-[5px]">
                <IconButton label="Zu Favoriten"><StarPlusGlyph /></IconButton>
                <div className="mx-[5px] flex min-w-0 flex-1">
                  <Combo id="fav" label="Favoritenliste" value="Meine Querschnitte | Basis" />
                </div>
                <div className="flex gap-[3px]">
                  <IconButton label="Verwalten"><HandGlyph /></IconButton>
                  <IconButton label="Neue Liste"><NewGlyph /></IconButton>
                </div>
              </Panel>
            </div>
            <div className="flex min-w-0 flex-col gap-[10px]">
              <Panel className="flex flex-1 flex-col pr-[6px] pl-1">
                <p className="text-[10px] leading-5 text-[#111]">Massives Rechteckprofil</p>
                <div className="flex flex-1 items-center justify-center pt-[58px]">
                  <ProfileSketch />
                </div>
              </Panel>
              <Panel className="h-[27px] shrink-0" />
            </div>
            <div className="flex min-w-0 flex-col gap-2">
              <Panel className="shrink-0 px-[5px] py-1">
                <ShapePalette />
              </Panel>
              <ResultPanel />
            </div>
          </div>
        </div>
      </main>
      <Footer />
    </div>
  );
}
